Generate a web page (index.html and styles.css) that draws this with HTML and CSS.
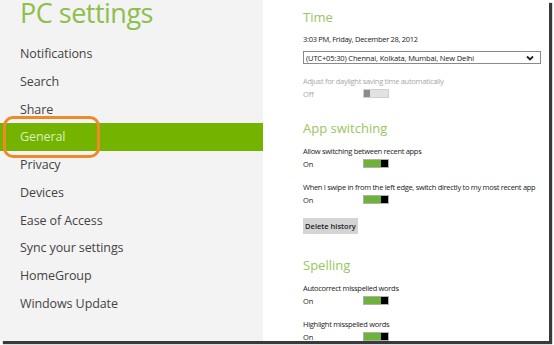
FILE: index.html
```html
<html>
    <head>
        <link rel="stylesheet" href="styles.css">
    </head>
    <body>
        <div class="frame">
            <div class="sidebar">
                <div class="title">PC settings</div>
                <div class="nav">
                    <div class="nav-item">Notifications</div>
                    <div class="nav-item">Search</div>
                    <div class="nav-item">Share</div>
                    <div class="nav-item active">General<span class="callout"></span></div>
                    <div class="nav-item">Privacy</div>
                    <div class="nav-item">Devices</div>
                    <div class="nav-item">Ease of Access</div>
                    <div class="nav-item">Sync your settings</div>
                    <div class="nav-item">HomeGroup</div>
                    <div class="nav-item">Windows Update</div>
                </div>
            </div>
            <div class="content">
                <!-- time -->
                <div class="heading">Time</div>
                <div class="text date">3:03 PM, Friday, December 28, 2012</div>
                <div class="select">
                    <span>(UTC+05:30) Chennai, Kolkata, Mumbai, New Delhi</span>
                    <svg width="8" height="6" viewBox="0 0 8 6"><path d="M1 1.5 L4 4.5 L7 1.5" fill="none" stroke="#222" stroke-width="1.8"/></svg>
                </div>
                <div class="text muted gap-select">Adjust for daylight saving time automatically</div>
                <div class="row muted">
                    <span>Off</span>
                    <span class="toggle off"><span class="thumb"></span></span>
                </div>

                <!-- app switching -->
                <div class="heading gap-section">App switching</div>
                <div class="text gap-head">Allow switching between recent apps</div>
                <div class="row">
                    <span>On</span>
                    <span class="toggle on"><span class="thumb"></span></span>
                </div>
                <div class="text gap-item">When I swipe in from the left edge, switch directly to my most recent app</div>
                <div class="row">
                    <span>On</span>
                    <span class="toggle on"><span class="thumb"></span></span>
                </div>
                <div class="button">Delete history</div>

                <!-- spelling -->
                <div class="heading gap-button">Spelling</div>
                <div class="text gap-head">Autocorrect misspelled words</div>
                <div class="row">
                    <span>On</span>
                    <span class="toggle on"><span class="thumb"></span></span>
                </div>
                <div class="text gap-item">Highlight misspelled words</div>
                <div class="row">
                    <span>On</span>
                    <span class="toggle on"><span class="thumb"></span></span>
                </div>
            </div>
        </div>
    </body>
</html>
```

FILE: styles.css
```css
body {
    margin: 0;
    background-color: #ffffff;
    font-family: "Open Sans", "Noto Sans", sans-serif;
}

.frame {
    width: 549px;
    height: 341px;
    display: flex;
    overflow: hidden;
    box-shadow: 3px 3px 1px #3a3a3a;
}

.sidebar {
    width: 263px;
    flex-shrink: 0;
    background-color: #f3f3f3;
}

.title {
    padding-left: 20px;
    height: 40px;
    font-size: 27px;
    line-height: 26px;
    color: #8dbf4c;
    letter-spacing: -0.5px;
}

.nav-item {
    height: 27.75px;
    line-height: 27.75px;
    padding-left: 20px;
    font-size: 12.5px;
    color: #444444;
    letter-spacing: -0.1px;
}

.nav-item.active {
    position: relative;
    background-color: #74b300;
    color: #dcefbf;
}

.callout {
    position: absolute;
    left: 3px;
    top: -7px;
    width: 91px;
    height: 36px;
    border: 3px solid #f08a28;
    border-radius: 10px;
}

.content {
    flex: 1;
    padding: 7px 0 0 40px;
    background-color: #ffffff;
    color: #222222;
}

.heading {
    font-size: 13px;
    line-height: 20px;
    color: #98c660;
}

.text {
    font-size: 7.5px;
    line-height: 12px;
    letter-spacing: -0.3px;
    margin-top: 6px;
    white-space: nowrap;
}

.muted {
    color: #a8a8a8;
}

.select {
    margin-top: 6px;
    width: 238px;
    height: 13px;
    border: 1px solid #8a8a8a;
    box-sizing: border-box;
    display: flex;
    align-items: center;
    justify-content: space-between;
    padding: 0 6px 0 2px;
    font-size: 7.5px;
    letter-spacing: -0.15px;
}

.gap-select { margin-top: 11px; }
.gap-section { margin-top: 18px; }
.gap-head { margin-top: 7px; }
.gap-item { margin-top: 11px; }
.gap-button { margin-top: 21px; }

.row {
    display: grid;
    grid-template-columns: 60px 26px;
    align-items: center;
    height: 13px;
    font-size: 7.5px;
}

.toggle {
    height: 9px;
    box-sizing: border-box;
    border: 1px solid #b0b0b0;
    display: flex;
}

.toggle.on {
    background-color: #6db33a;
    justify-content: flex-end;
}

.toggle.on .thumb {
    width: 7px;
    background-color: #000000;
}

.toggle.off {
    background-color: #e2e2e2;
    border-color: #d0d0d0;
}

.toggle.off .thumb {
    width: 6px;
    background-color: #8c8c8c;
}

.button {
    margin-top: 12px;
    width: 55px;
    height: 16px;
    line-height: 16px;
    text-align: center;
    background-color: #d4d4d4;
    font-size: 7.5px;
    font-weight: 600;
    color: #222222;
}
```
